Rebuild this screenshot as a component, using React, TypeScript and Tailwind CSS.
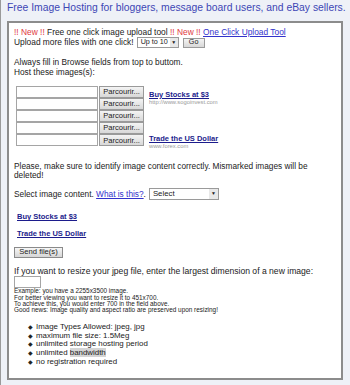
const ads = [
  { title: 'Buy Stocks at $3', url: 'http://www.sogoinvest.com' },
  { title: 'Trade the US Dollar', url: 'www.forex.com' },
]

const notes = [
  'Example: you have a 2255x3500 image.',
  'For better viewing you want to resize it to 451x700.',
  'To achieve this, you would enter 700 in the field above.',
  'Good news: Image quality and aspect ratio are preserved upon resizing!',
]

const features = [
  'Image Types Allowed: jpeg, jpg',
  'maximum file size: 1.5Meg',
  'unlimited storage hosting period',
  'bandwidth',
  'no registration required',
]

function FileRow() {
  return (
    <div className="flex h-[12px] items-center">
      <div className="h-[12px] w-[82px] border border-[#a5a5a5] bg-white" />
      <div className="ml-[1px] flex h-[12px] w-[45px] items-center justify-center border border-[#9a9a9a] bg-gradient-to-b from-[#f4f4f4] to-[#d8d8d8] text-[7.6px] text-[#222]">
        Parcourir...
      </div>
    </div>
  )
}

function AdLink({ title, url }: { title: string; url: string }) {
  return (
    <div className="leading-none">
      <div className="h-[8px] text-[7.5px] font-bold text-[#1c1c8c] underline">{title}</div>
      <div className="mt-[1px] h-[6px] text-[5.8px] text-[#9a9a9a]">{url}</div>
    </div>
  )
}

export default function App() {
  return (
    <div className="h-[385px] w-[350px] overflow-hidden border-l border-[#9a9a9a] bg-[#eef1f7] pl-[6px] pr-[6px] font-['Liberation_Sans',Arial,sans-serif] text-[#222]">
      <div className="pt-[1px] text-[10.35px] leading-[14px] whitespace-nowrap text-[#3d46b5]">
        Free Image Hosting for bloggers, message board users, and eBay sellers.
      </div>

      <div className="mt-[5.5px] h-[359.5px] w-[336px] border-2 border-[#8c8c8c] bg-white pl-[5px] pt-[4px]">
        <div className="h-[10px] text-[8.4px] leading-[10px] whitespace-nowrap">
          <span className="text-[#e0393e]">!! New !!</span> Free one click image upload tool{' '}
          <span className="text-[#e0393e]">!! New !!</span>{' '}
          <span className="text-[#3333cc] underline">One Click Upload Tool</span>
        </div>
        <div className="flex h-[12px] items-center text-[8.4px] whitespace-nowrap">
          <span>Upload more files with one click!</span>
          <div className="ml-[3px] flex h-[11px] w-[42px] items-center justify-between border border-[#9a9a9a] bg-white pl-[3px] text-[7.2px]">
            <span>Up to 10</span>
            <span className="flex h-[9px] w-[8px] items-center justify-center bg-[#e8e8e8] text-[5px]">▼</span>
          </div>
          <div className="ml-[4px] flex h-[10px] w-[22px] items-center justify-center border border-[#9a9a9a] bg-gradient-to-b from-[#f4f4f4] to-[#d8d8d8] text-[7.2px]">
            Go
          </div>
        </div>

        <div className="mt-[8px] text-[8.3px] leading-[10px]">Always fill in Browse fields from top to buttom.</div>
        <div className="text-[8.3px] leading-[10px]">Host these images(s):</div>

        <div className="mt-[9px] flex pl-[2px]">
          <div className="flex flex-col gap-[0.2px]">
            <FileRow />
            <FileRow />
            <FileRow />
            <FileRow />
            <FileRow />
          </div>
          <div className="ml-[5px] flex flex-col gap-[29px] pt-[5px]">
            <AdLink title={ads[0].title} url={ads[0].url} />
            <AdLink title={ads[1].title} url={ads[1].url} />
          </div>
        </div>

        <div className="mt-[12px] pr-[8px] text-[8.3px] leading-[9px]">
          Please, make sure to identify image content correctly. Mismarked images will be deleted!
        </div>

        <div className="mt-[8.5px] flex h-[12px] items-center text-[8.3px] whitespace-nowrap">
          <span>
            Select image content. <span className="text-[#3333cc] underline">What is this?</span>.
          </span>
          <div className="ml-[3px] flex h-[12px] w-[70px] items-center justify-between border border-[#9a9a9a] bg-white pl-[3px] text-[7.8px]">
            <span>Select</span>
            <span className="flex h-[10px] w-[9px] items-center justify-center bg-[#e8e8e8] text-[5px]">▼</span>
          </div>
        </div>

        <div className="mt-[12.3px] pl-[3px] text-[7.5px] leading-[10px] font-bold text-[#1c1c8c] underline">
          Buy Stocks at $3
        </div>
        <div className="mt-[6.7px] pl-[3px] text-[7.5px] leading-[10px] font-bold text-[#1c1c8c] underline">
          Trade the US Dollar
        </div>

        <div className="mt-[7.6px] flex h-[11px] w-[49px] items-center justify-center border border-[#8a8a8a] bg-gradient-to-b from-[#f6f6f6] to-[#d6d6d6] text-[7.6px]">
          Send file(s)
        </div>

        <div className="mt-[9.7px] text-[8.6px] leading-[9px] whitespace-nowrap">
          If you want to resize your jpeg file, enter the largest dimension of a new image:
        </div>
        <div className="h-[12px] w-[27px] border border-[#a5a5a5] bg-white" />
        <div className="text-[6.4px] leading-[6.35px] whitespace-nowrap">
          {notes.map((n) => (
            <div key={n}>{n}</div>
          ))}
        </div>

        <ul className="mt-[9.1px] pl-[14px] text-[7.9px] leading-[8.8px]">
          {features.map((f) => (
            <li key={f} className="flex items-center gap-[3px]">
              <span className="text-[5.5px]">◆</span>
              {f === 'bandwidth' ? (
                <span>
                  unlimited <span className="bg-[#d4d4d4]">bandwidth</span>
                </span>
              ) : (
                <span>{f}</span>
              )}
            </li>
          ))}
        </ul>
      </div>
    </div>
  )
}
